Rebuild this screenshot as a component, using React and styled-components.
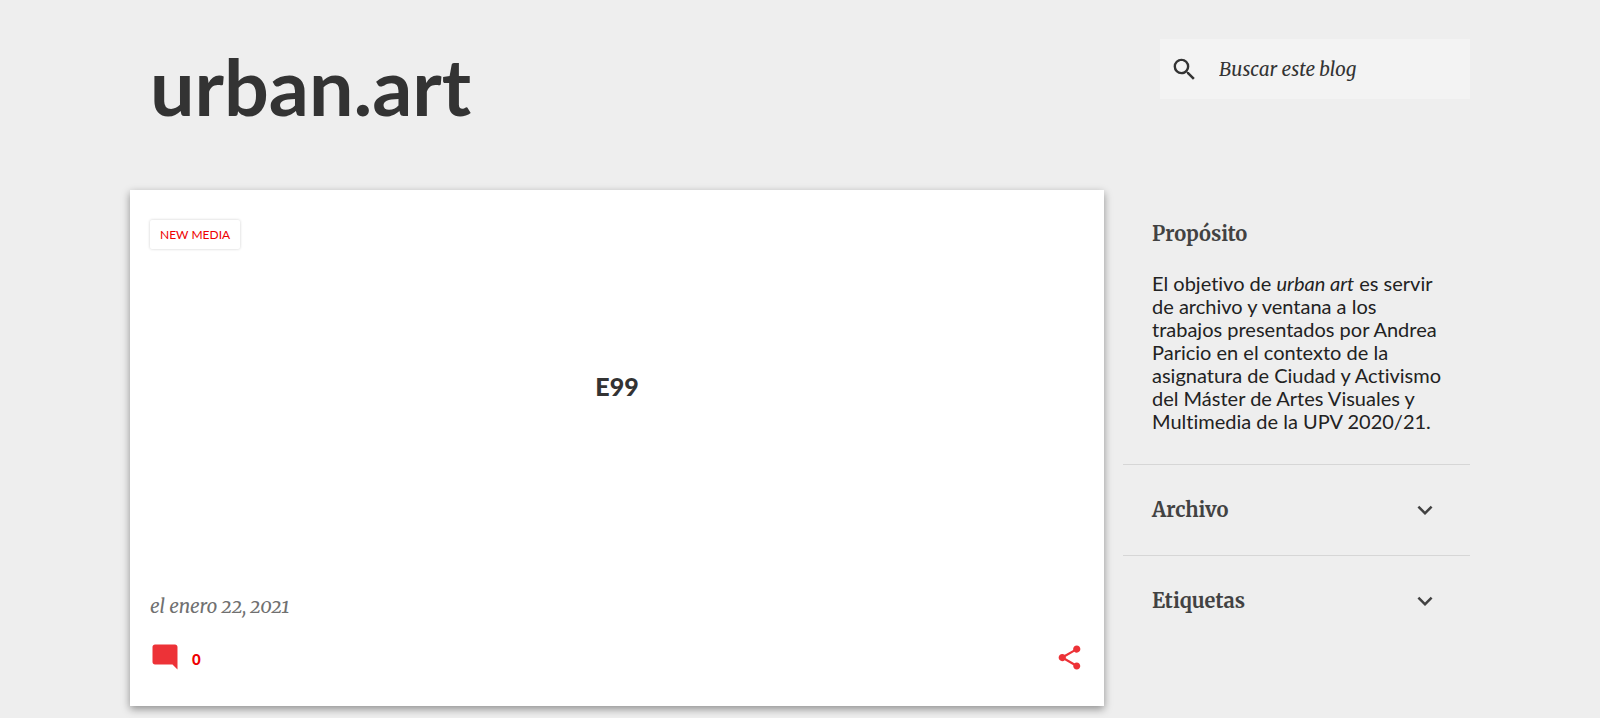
import React, { useState } from "react";
import styled, { createGlobalStyle } from "styled-components";
import {
  MdSearch,
  MdModeComment,
  MdShare,
  MdKeyboardArrowDown,
} from "react-icons/md";

const sans = `Lato, "Open Sans", sans-serif`;
const serif = `Merriweather, "DejaVu Serif Condensed", "DejaVu Serif", serif`;
const serifItalic = `Merriweather, "Liberation Serif", "Times New Roman", serif`;

const GlobalStyle = createGlobalStyle`
  * {
    box-sizing: border-box;
  }
  body {
    margin: 0;
    background: #eeeeee;
    color: #333333;
    font-family: ${sans};
    font-variant-ligatures: none;
  }
  h1, h2, h3, p {
    margin: 0;
  }
  a {
    color: inherit;
    text-decoration: none;
  }
  button {
    padding: 0;
    border: 0;
    background: none;
    color: inherit;
    cursor: pointer;
  }
`;

const Page = styled.div`
  max-width: 1340px;
  margin: 0 auto;
  padding-bottom: 12px;
`;

const Header = styled.header`
  display: flex;
  justify-content: space-between;
  align-items: flex-start;
  height: 190px;
  padding: 39px 0 0 20px;
`;

const BlogTitle = styled.h1`
  font-size: 79px;
  font-weight: 700;
  line-height: 94px;
`;

const SearchForm = styled.form`
  display: flex;
  align-items: center;
  gap: 20px;
  width: 310px;
  height: 60px;
  padding: 0 10px;
  background: #f3f3f3;
`;

const SearchButton = styled.button`
  display: flex;
  font-size: 29px;
`;

const SearchInput = styled.input`
  flex: 1;
  min-width: 0;
  padding: 0;
  border: 0;
  outline: 0;
  background: none;
  color: #333333;
  font: italic 19px ${serifItalic};
  &::placeholder {
    color: #333333;
    opacity: 1;
  }
`;

const Columns = styled.div`
  display: grid;
  grid-template-columns: minmax(0, 1fr) 347px;
  gap: 19px;
  align-items: start;
`;

const Post = styled.article`
  display: flex;
  flex-direction: column;
  min-height: 516px;
  padding: 30px 20px 19px;
  background: #ffffff;
  box-shadow: 0 3px 8px rgba(0, 0, 0, 0.4);
`;

const Label = styled.a`
  align-self: flex-start;
  padding: 0 10px;
  border-radius: 2px;
  box-shadow: 0 0 3px rgba(0, 0, 0, 0.2);
  color: #ee0000;
  font-size: 12px;
  line-height: 29px;
  text-transform: uppercase;
`;

const PostTitle = styled.h2`
  flex: 1;
  padding-top: 122px;
  font-size: 25px;
  font-weight: 900;
  line-height: 30px;
  text-align: center;
`;

const PostDate = styled.time`
  color: #707070;
  font: italic 19px ${serifItalic};
  font-variant-numeric: oldstyle-nums;
  line-height: 24px;
`;

const PostFooter = styled.footer`
  display: flex;
  justify-content: space-between;
  align-items: center;
  height: 60px;
  margin-top: 9px;
  color: #ed3237;
`;

const Comments = styled.a`
  display: flex;
  align-items: center;
  gap: 12px;
  color: #ed3237;
  font-size: 30px;
`;

const CommentCount = styled.span`
  padding-top: 4px;
  color: #ee0000;
  font-size: 15px;
  font-weight: 900;
  line-height: 20px;
`;

const ShareButton = styled.button`
  display: flex;
  font-size: 29px;
`;

const Section = styled.section`
  padding: 29px 24px 31px 29px;
  & + & {
    border-top: 1px solid #d6d6d6;
    padding: 30px 30px 30px 29px;
  }
`;

const SectionTitle = styled.h3`
  color: #424242;
  font-family: ${serif};
  font-size: 20px;
  font-weight: 700;
  line-height: 30px;
`;

const SectionText = styled.p`
  margin-top: 23px;
  color: #222222;
  font-size: 20px;
  line-height: 23px;
`;

const Toggle = styled.button`
  display: flex;
  justify-content: space-between;
  align-items: center;
  width: 100%;
  font: inherit;
  line-height: 30px;
  svg {
    font-size: 30px;
    transform: ${({ $open }) => ($open ? "rotate(180deg)" : "none")};
  }
`;

const sections = [
  { title: "Archivo", text: "enero 2021" },
  { title: "Etiquetas", text: "New Media" },
];

function Collapsible({ title, text }) {
  const [open, setOpen] = useState(false);

  return (
    <Section>
      <SectionTitle>
        <Toggle
          type="button"
          $open={open}
          aria-expanded={open}
          onClick={() => setOpen(!open)}
        >
          {title}
          <MdKeyboardArrowDown />
        </Toggle>
      </SectionTitle>
      {open && <SectionText>{text}</SectionText>}
    </Section>
  );
}

function App() {
  return (
    <>
      <GlobalStyle />
      <Page>
        <Header>
          <BlogTitle>
            <a href="#inicio">urban.art</a>
          </BlogTitle>
          <SearchForm role="search" onSubmit={(e) => e.preventDefault()}>
            <SearchButton type="submit" aria-label="Buscar">
              <MdSearch />
            </SearchButton>
            <SearchInput
              type="text"
              name="q"
              aria-label="Buscar este blog"
              placeholder="Buscar este blog"
            />
          </SearchForm>
        </Header>
        <Columns>
          <main>
            <Post>
              <Label href="#new-media">New Media</Label>
              <PostTitle>
                <a href="#e99">E99</a>
              </PostTitle>
              <PostDate dateTime="2021-01-22">el enero 22, 2021</PostDate>
              <PostFooter>
                <Comments href="#comentarios" aria-label="0 comentarios">
                  <MdModeComment />
                  <CommentCount>0</CommentCount>
                </Comments>
                <ShareButton type="button" aria-label="Compartir">
                  <MdShare />
                </ShareButton>
              </PostFooter>
            </Post>
          </main>
          <aside>
            <Section>
              <SectionTitle>Propósito</SectionTitle>
              <SectionText>
                El objetivo de <em>urban art</em> es servir de archivo y ventana
                a los trabajos presentados por Andrea Paricio en el contexto de
                la asignatura de Ciudad y Activismo del Máster de Artes Visuales
                y Multimedia de la UPV 2020/21.
              </SectionText>
            </Section>
            {sections.map((section) => (
              <Collapsible key={section.title} {...section} />
            ))}
          </aside>
        </Columns>
      </Page>
    </>
  );
}

export default App;
